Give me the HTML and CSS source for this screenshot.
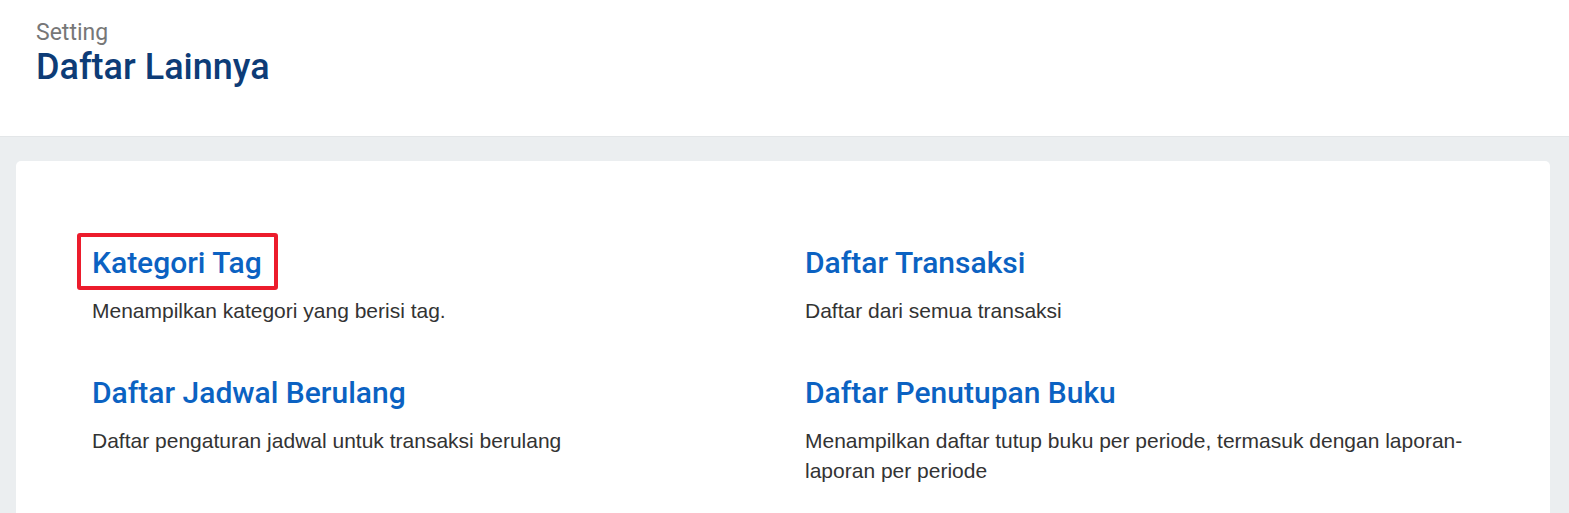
FILE: index.html
```html
<!DOCTYPE html>
<html lang="id">
<head>
    <meta charset="UTF-8">
    <meta name="viewport" content="width=device-width, initial-scale=1.0">
    <title>Daftar Lainnya</title>
    <link rel="stylesheet" href="styles.css">
</head>
<body>
    <header class="page-header">
        <div class="breadcrumb">Setting</div>
        <h1 class="page-title">Daftar Lainnya</h1>
    </header>

    <main class="page-body">
        <div class="card">
            <div class="menu-grid">
                <div class="menu-item">
                    <a href="#" class="menu-link highlighted">Kategori Tag</a>
                    <p class="menu-desc">Menampilkan kategori yang berisi tag.</p>
                </div>
                <div class="menu-item">
                    <a href="#" class="menu-link">Daftar Transaksi</a>
                    <p class="menu-desc">Daftar dari semua transaksi</p>
                </div>
                <div class="menu-item">
                    <a href="#" class="menu-link">Daftar Jadwal Berulang</a>
                    <p class="menu-desc">Daftar pengaturan jadwal untuk transaksi berulang</p>
                </div>
                <div class="menu-item">
                    <a href="#" class="menu-link">Daftar Penutupan Buku</a>
                    <p class="menu-desc">Menampilkan daftar tutup buku per periode, termasuk dengan laporan-laporan per periode</p>
                </div>
            </div>
        </div>
    </main>
</body>
</html>
```

FILE: styles.css
```css
body {
    margin: 0;
    background-color: #ebeef0;
    font-family: Roboto, "Liberation Sans", Arial, sans-serif;
}
.page-header {
    background-color: #fff;
    height: 137px;
    box-sizing: border-box;
    padding: 19px 36px 0;
    border-bottom: 1px solid #e3e6e8;
}
.breadcrumb {
    font-size: 23px;
    line-height: 27px;
    color: #777;
}
.page-title {
    margin: 0;
    font-size: 36px;
    font-weight: 500;
    line-height: 42px;
    color: #0d3c77;
}
.page-body {
    padding: 24px 19px 0 16px;
}
.card {
    background-color: #fff;
    border-radius: 5px;
    padding: 76px 76px 20px;
    min-height: 400px;
}
.menu-grid {
    display: grid;
    grid-template-columns: 669px 669px;
    column-gap: 44px;
    row-gap: 41px;
}
.menu-link {
    display: inline-block;
    font-size: 30px;
    font-weight: 500;
    line-height: 36px;
    color: #0b62c2;
    text-decoration: none;
    padding: 8px 0;
}
.highlighted {
    border: 4px solid #ec1c2c;
    border-radius: 3px;
    padding: 8px 12px 5px 11px;
    margin: -4px 0 -1px -15px;
}
.menu-desc {
    margin: 7px 0 0;
    font-family: "Liberation Sans", Arial, sans-serif;
    font-size: 21px;
    line-height: 30px;
    color: #333;
}
```
